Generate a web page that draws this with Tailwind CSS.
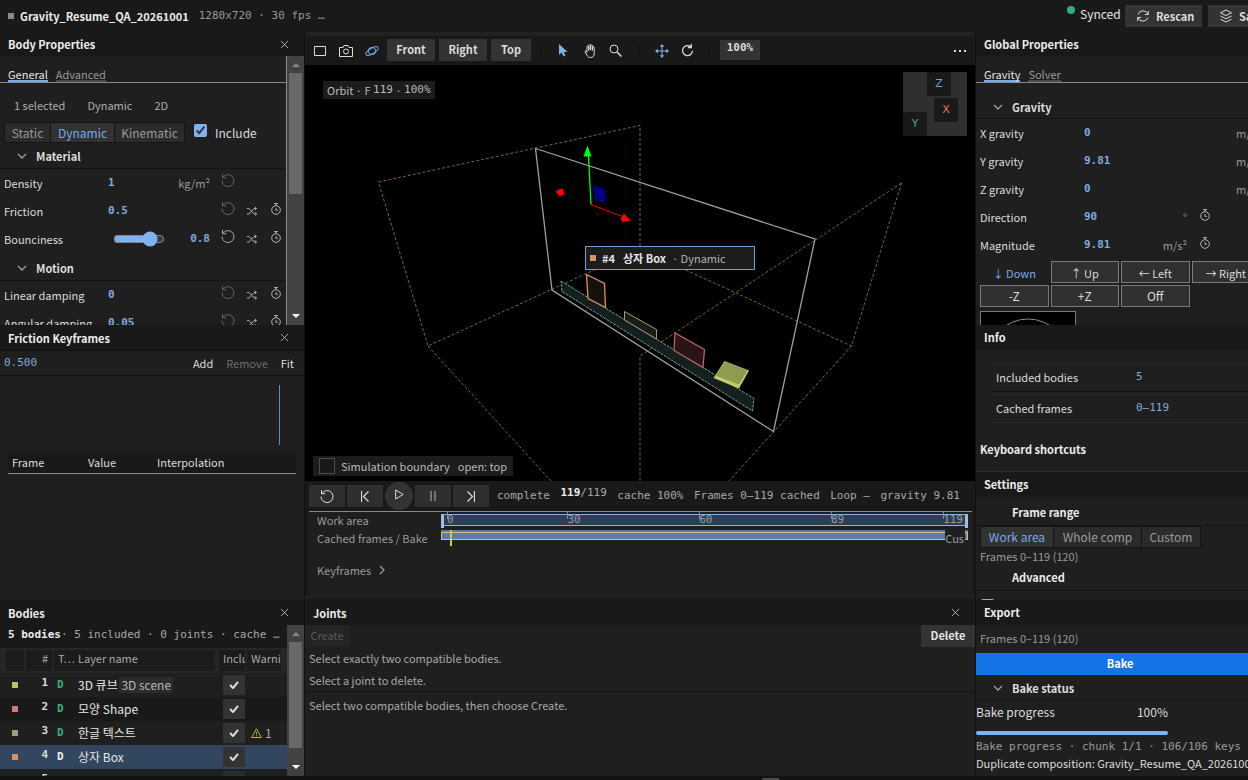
<!DOCTYPE html>
<html lang="en">
  <head>
    <meta charset="UTF-8" />
    <meta name="viewport" content="width=device-width, initial-scale=1.0" />
    <title>Gravity - Gravity_Resume_QA_20261001</title>
    <script src="https://cdn.jsdelivr.net/npm/@tailwindcss/browser@4"></script>
  </head>
  <body
    class="h-screen overflow-hidden flex flex-col bg-[#191919] text-[#dcdcdc] text-[12px] leading-4 font-['Noto_Sans_CJK_KR',sans-serif] scheme-dark"
  >
    <!-- Icon sprite -->
    <svg class="hidden" xmlns="http://www.w3.org/2000/svg">
      <symbol id="i-close" viewBox="0 0 10 10"><path d="M1 1l8 8M9 1l-8 8" fill="none" stroke="currentColor" /></symbol>
      <symbol id="i-chevron" viewBox="0 0 10 6"><path d="M1 1l4 4 4-4" fill="none" stroke="currentColor" stroke-width="1.3" /></symbol>
      <symbol id="i-reset" viewBox="0 0 14 14"><path d="M1.5 1v3.8h3.8M1.8 4.6A6 6 0 1 1 1 7.6" fill="none" stroke="currentColor" /></symbol>
      <symbol id="i-shuffle" viewBox="0 0 10 10"><path d="M0 2.5h2L7 8h2.5M0 8h2L7 2.5h2.5M7.8 .8l1.7 1.7-1.7 1.7M7.8 6.2L9.5 8 7.8 9.7" fill="none" stroke="currentColor" /></symbol>
      <symbol id="i-timer" viewBox="0 0 10 12"><path d="M3 .6h4M5 .6v2M5 4.8V7.2L6.8 7.6" fill="none" stroke="currentColor" /><circle cx="5" cy="7" r="4.3" fill="none" stroke="currentColor" /></symbol>
      <symbol id="i-check" viewBox="0 0 10 8"><path d="M1 4l3 3 5-6" fill="none" stroke="currentColor" stroke-width="2" /></symbol>
    </svg>

    <!-- Top bar -->
    <header class="h-8 shrink-0 flex items-center pl-2 overflow-hidden">
      <span class="size-[6px] bg-[#8a8a8a] mr-[6px]"></span>
      <h1 class="text-[11px] font-bold text-[#ececec]">Gravity_Resume_QA_20261001</h1>
      <span class="ml-[10px] text-[11px] text-[#9a9a9a] font-['DejaVu_Sans_Mono',monospace]">1280x720 · 30 fps …</span>
      <div class="ml-auto flex items-center shrink-0 w-[181px] whitespace-nowrap">
        <span class="size-2 shrink-0 rounded-full bg-[#2fae82] mb-3 mr-[5px]"></span>
        <span class="w-[45px] shrink-0 text-[#e4e4e4] -mt-1">Synced</span>
        <button class="h-[22px] w-[77px] shrink-0 bg-[#333] flex items-center gap-[6px] pl-[11px] text-[11px] font-bold">
          <svg class="size-[14px]" viewBox="0 0 14 14" fill="none" stroke="currentColor"><path d="M2 5.500A5.300 5.300 0 0 1 12 5.200M12.300 2v3.500H8.800M12 8.500A5.300 5.300 0 0 1 2 8.800M1.700 12V8.500H5.200" /></svg>
          Rescan
        </button>
        <button class="ml-[6px] h-[22px] w-[77px] shrink-0 bg-[#333] flex items-center gap-[6px] pl-[11px] text-[11px] font-bold">
          <svg class="size-[14px] shrink-0" viewBox="0 0 14 14" fill="none" stroke="currentColor"><path d="M7 1l5.500 2.800L7 6.600 1.500 3.800zM1.500 7L7 9.800 12.500 7M1.500 10.200L7 13l5.500-2.800" /></svg>
          Save
        </button>
      </div>
    </header>

    <div class="flex-1 min-h-0 flex">
      <!-- Left column -->
      <div class="w-[304px] shrink-0 flex flex-col">
        <!-- Body Properties -->
        <section class="h-[293px] flex flex-col overflow-hidden">
          <div class="h-6 shrink-0 flex items-center justify-between pl-2 pr-[15px]">
            <h2 class="font-bold text-[11px] text-[#ececec]">Body Properties</h2>
            <button aria-label="Close Body Properties"><svg class="size-[9px] text-[#b8b8b8]"><use href="#i-close" /></svg></button>
          </div>
          <div class="flex-1 min-h-0 flex bg-[#1f1f1f]">
            <div class="flex-1 min-w-0 border-r border-[#8a8a8a]">
              <div role="tablist" class="h-[27px] flex items-end gap-2 pl-2 border-b border-[#8a8a8a] text-[11px] leading-3">
                <button role="tab" aria-selected="true" class="border-b-2 border-[#78a9ea] text-[#e4e4e4]">General</button>
                <button role="tab" class="border-b-2 border-[#4a4a4a] text-[#9a9a9a]">Advanced</button>
              </div>
              <div class="h-[39px] pt-[14px] pl-[14px] flex gap-[22px] text-[11px] text-[#adadad]">
                <span>1 selected</span><span>Dynamic</span><span>2D</span>
              </div>
              <div class="h-[21px] pl-1 flex">
                <div class="flex border border-[#141414] divide-x divide-[#141414] bg-[#2b2b2b] text-[#9a9a9a]">
                  <button class="w-[46px]">Static</button>
                  <button class="w-[64px] bg-[#323232] text-[#78a9ea]">Dynamic</button>
                  <button class="w-[69px]">Kinematic</button>
                </div>
                <label class="ml-[9px] flex items-center gap-2 text-[#dcdcdc]">
                  <input type="checkbox" checked class="size-[13px] mb-1 accent-[#7fb2f0]" />Include
                </label>
              </div>
              <h3 class="h-[26px] pt-px pl-[17px] flex items-center gap-[9px] border-b border-[#141414] font-bold text-[11px]"><svg class="w-[10px] h-[6px] text-[#a0a0a0]"><use href="#i-chevron" /></svg>Material</h3>
              <div class="h-7 pl-1 pb-px flex items-center text-[11px]">
                <label for="density" class="w-[104px]">Density</label>
                <input id="density" value="1" class="w-[59px] font-bold text-[#7fa9df] font-['DejaVu_Sans_Mono',monospace]" />
                <span class="w-[43px] text-right text-[#9a9a9a]">kg/m²</span>
                <button aria-label="Reset" class="ml-[11px] mb-[5px] text-[#666]"><svg class="size-[14px]"><use href="#i-reset" /></svg></button>
              </div>
              <div class="h-7 pl-1 pb-px flex items-center text-[11px]">
                <label for="friction" class="w-[104px]">Friction</label>
                <input id="friction" value="0.5" class="w-[102px] font-bold text-[#7fa9df] font-['DejaVu_Sans_Mono',monospace]" />
                <button aria-label="Reset" class="ml-[11px] mb-[5px] text-[#666]"><svg class="size-[14px]"><use href="#i-reset" /></svg></button>
                <button aria-label="Randomize" class="ml-3 text-[#a8a8a8]"><svg class="size-[10px]"><use href="#i-shuffle" /></svg></button>
                <button aria-label="Keyframe" class="ml-[14px] mb-1 text-[#b4b4b4]"><svg class="w-[10px] h-3"><use href="#i-timer" /></svg></button>
              </div>
              <div class="h-7 pl-1 pb-px flex items-center text-[11px]">
                <label for="bounce" class="w-[109px]">Bounciness</label>
                <input id="bounce" type="range" min="0" max="1" step="0.1" value="0.8" class="w-[52px] accent-[#7fb2f0]" />
                <input aria-label="Bounciness value" value="0.8" class="ml-[5px] w-[40px] text-right font-bold text-[#7fa9df] font-['DejaVu_Sans_Mono',monospace]" />
                <button aria-label="Reset" class="ml-[11px] mb-[5px] text-[#a8a8a8]"><svg class="size-[14px]"><use href="#i-reset" /></svg></button>
                <button aria-label="Randomize" class="ml-3 text-[#a8a8a8]"><svg class="size-[10px]"><use href="#i-shuffle" /></svg></button>
                <button aria-label="Keyframe" class="ml-[14px] mb-1 text-[#b4b4b4]"><svg class="w-[10px] h-3"><use href="#i-timer" /></svg></button>
              </div>
              <h3 class="mt-[2px] h-[26px] pt-px pl-[17px] flex items-center gap-[9px] border-b border-[#141414] font-bold text-[11px]"><svg class="w-[10px] h-[6px] text-[#a0a0a0]"><use href="#i-chevron" /></svg>Motion</h3>
              <div class="h-7 pl-1 pb-px flex items-center text-[11px]">
                <label for="lin" class="w-[104px]">Linear damping</label>
                <input id="lin" value="0" class="w-[102px] font-bold text-[#7fa9df] font-['DejaVu_Sans_Mono',monospace]" />
                <button aria-label="Reset" class="ml-[11px] mb-[5px] text-[#666]"><svg class="size-[14px]"><use href="#i-reset" /></svg></button>
                <button aria-label="Randomize" class="ml-3 text-[#a8a8a8]"><svg class="size-[10px]"><use href="#i-shuffle" /></svg></button>
                <button aria-label="Keyframe" class="ml-[14px] mb-1 text-[#b4b4b4]"><svg class="w-[10px] h-3"><use href="#i-timer" /></svg></button>
              </div>
              <div class="h-7 pl-1 pb-px flex items-center text-[11px]">
                <label for="ang" class="w-[104px]">Angular damping</label>
                <input id="ang" value="0.05" class="w-[102px] font-bold text-[#7fa9df] font-['DejaVu_Sans_Mono',monospace]" />
                <button aria-label="Reset" class="ml-[11px] mb-[5px] text-[#666]"><svg class="size-[14px]"><use href="#i-reset" /></svg></button>
                <button aria-label="Randomize" class="ml-3 text-[#a8a8a8]"><svg class="size-[10px]"><use href="#i-shuffle" /></svg></button>
                <button aria-label="Keyframe" class="ml-[14px] mb-1 text-[#b4b4b4]"><svg class="w-[10px] h-3"><use href="#i-timer" /></svg></button>
              </div>
            </div>
            <div class="w-[17px] bg-[#424242] flex flex-col items-center">
              <svg class="h-[17px] w-2 text-[#868686]" viewBox="0 0 8 17"><path d="M0 11l4-4 4 4z" fill="currentColor" /></svg>
              <div class="w-[13px] h-[121px] bg-[#686868]"></div>
              <svg class="mt-auto h-[17px] w-2 text-white" viewBox="0 0 8 17"><path d="M0 6h8l-4 4z" fill="currentColor" /></svg>
            </div>
          </div>
        </section>

        <!-- Friction Keyframes -->
        <section class="flex-1 min-h-0 flex flex-col">
          <div class="h-[26px] shrink-0 flex items-center justify-between pl-2 pr-[15px] border-b border-[#111]">
            <h2 class="font-bold text-[11px] text-[#ececec]">Friction Keyframes</h2>
            <button aria-label="Close Friction Keyframes"><svg class="size-[9px] text-[#b8b8b8]"><use href="#i-close" /></svg></button>
          </div>
          <div class="flex-1 min-h-0 bg-[#1f1f1f]">
            <div class="h-[25px] pl-1 pr-[10px] pb-px flex items-center gap-[13px] border-b border-[#111] text-[11px]">
              <input aria-label="Value" value="0.500" class="flex-1 min-w-0 text-[#7fa9df] font-['DejaVu_Sans_Mono',monospace]" />
              <button>Add</button>
              <button disabled class="text-[#6e6e6e]">Remove</button>
              <button>Fit</button>
            </div>
            <div class="h-[77px] pt-[9px] pr-6 flex justify-end"><div class="w-px h-[60px] bg-[#6a8bb8]"></div></div>
            <table class="mx-2 w-[288px] table-fixed text-[11px] text-left">
              <thead>
                <tr class="h-5 bg-[#191919] border-b border-[#8a8a8a]">
                  <th class="w-[76px] pl-1 pb-[2px] font-normal">Frame</th>
                  <th class="w-[69px] pl-1 pb-[2px] font-normal">Value</th>
                  <th class="pl-1 pb-[2px] font-normal">Interpolation</th>
                </tr>
              </thead>
            </table>
          </div>
        </section>
      </div>

      <!-- Centre column -->
      <main class="flex-1 min-w-0 flex flex-col border-x border-[#101010]">
        <div class="h-1 shrink-0 bg-[#212121]"></div>
        <div class="h-[29px] shrink-0 flex items-center pl-[9px] pr-[9px]">
          <button aria-label="Frame"><svg class="w-[12px] h-[10px]" viewBox="0 0 12 10"><path d="M.5.5h11v9H.5z" fill="none" stroke="#dcdcdc" /></svg></button>
          <button aria-label="Camera" class="ml-[13px]"><svg class="w-[14px] h-3" viewBox="0 0 14 12" fill="none" stroke="#dcdcdc"><path d="M.5 2.500h3.500l1-2h4l1 2h3.500v9H.5z" /><circle cx="7" cy="6.500" r="2.500" /></svg></button>
          <button aria-label="Orbit" class="ml-[12px]"><svg class="w-[14px] h-3" viewBox="0 0 14 12" fill="none" stroke="#78a9ea"><circle cx="7" cy="6" r="3.700" /><ellipse cx="7" cy="6" rx="7" ry="2.600" transform="rotate(-32 7 6)" /></svg></button>
          <div class="ml-2 mb-[2px] flex gap-1 text-[11px] font-bold">
            <button class="h-[22px] w-[48px] pb-px bg-[#333]">Front</button>
            <button class="h-[22px] w-[48px] pb-px bg-[#333]">Right</button>
            <button class="h-[22px] w-[40px] pb-px bg-[#333]">Top</button>
          </div>
          <span class="ml-[10px] w-px h-3 bg-[#101010]"></span>
          <button aria-label="Select" class="ml-4"><svg class="w-[10px] h-[13px]" viewBox="0 0 10 13"><path d="M1 0v11l2.600-2.400L5.600 12.500l1.900-1L5.700 8H9.500z" fill="#7fb2f0" /></svg></button>
          <button aria-label="Pan" class="ml-4"><svg class="w-[12px] h-[14px]" viewBox="0 0 12 14" fill="none" stroke="#dcdcdc"><path d="M3 8V2.800a.9.900 0 0 1 1.800 0V6.500M4.800 6V1.500a.9.900 0 0 1 1.800 0V6M6.600 6.200V1.900a.9.900 0 0 1 1.800 0V6.500M8.400 6.500V3.500a.9.900 0 0 1 1.800 0V9.500C10.200 12 8.800 13.500 6.700 13.500 4.500 13.500 3.800 12.800 2.900 11.200L1 7.800C.8 6.900 2 6.500 2.500 7.200L3.200 8.500" /></svg></button>
          <button aria-label="Zoom" class="ml-[13px]"><svg class="size-[13px]" viewBox="0 0 13 13" fill="none" stroke="#dcdcdc"><circle cx="5" cy="5" r="4" /><path d="M8 8l4.500 4.500" stroke-width="1.500" /></svg></button>
          <span class="ml-4 w-px h-3 bg-[#101010]"></span>
          <button aria-label="Move" class="ml-4"><svg class="size-[14px]" viewBox="0 0 14 14" stroke="#7fb2f0" fill="#7fb2f0"><path d="M7 2v10M2 7h10" /><path d="M7 0L9.200 2.800H4.800zM7 14L4.800 11.200h4.400zM0 7L2.800 4.800v4.400zM14 7L11.200 9.200V4.800z" stroke="none" /></svg></button>
          <button aria-label="Rotate" class="ml-3"><svg class="size-[13px]" viewBox="0 0 13 13" fill="none" stroke="#dcdcdc" stroke-width="1.300"><path d="M9.800 2.800A5 5 0 1 0 11.500 6.800M10.300 0v3.500H6.800" /></svg></button>
          <span class="ml-[15px] w-px h-3 bg-[#101010]"></span>
          <button class="ml-[10px] mb-[2px] h-[20px] w-10 bg-[#333] pb-1 font-bold text-[11px] font-['DejaVu_Sans_Mono',monospace]">100%</button>
          <button aria-label="More" class="ml-auto"><svg class="w-3 h-2" viewBox="0 0 12 2" fill="#dcdcdc"><path d="M0 0h2v2H0zM5 0h2v2H5zM10 0h2v2H10z" /></svg></button>
        </div>

        <!-- Viewport -->
        <div class="relative flex-1 min-h-0 bg-black overflow-hidden">
          <svg class="size-full" viewBox="305 65 670 416" fill="none">
            <g stroke="#8f6b45" stroke-opacity=".9" stroke-dasharray="3 2">
              <path d="M378.500 182L640 125.500V249L428 346zM901.500 183L640 356V481M901.500 183L851.500 346 640 249M428 346L551 481M851.500 346L729 481" />
            </g>
            <path d="M535.500 148.500L815 239l-41.500 192.500L552 290z" stroke="#a0a0a0" stroke-width="1.300" />
            <path d="M561 281l193 117.500-1.500 12.500L562 291.500z" fill="#14201f" stroke="#6f9c98" stroke-dasharray="3 1" />
            <path d="M586.500 274.500l18 9 1 24-17.500-9z" fill="#15110c" stroke="#d8935c" stroke-width="1.300" />
            <path d="M624.500 311.500l32 18v9.500l-32-19z" fill="#1d1b15" stroke="#a39a80" />
            <path d="M675 333l29.500 16.500-1.500 18-29-17z" fill="#2a1417" stroke="#c46a6a" stroke-width="1.200" />
            <path d="M724.500 361l24.500 9.500-10 18-25.500-10.500z" fill="#c0cc66" />
            <path d="M725 361.500l22.500 9-8.500 14-23.500-9z" fill="#8e9b50" />
            <path d="M591 204.500L588.500 156" stroke="#0f0" stroke-width="1.300" />
            <path d="M587.500 145.500l4 11h-8z" fill="#0f0" />
            <path d="M591 204.500l30 11.500" stroke="#d00" stroke-width="1.200" />
            <path d="M631 221l-9 1-1-4 3-4.500zM557 190l6-1.500 1.500 5.500-4.500 2.500-4-4z" fill="#f00" />
            <path d="M593.500 185l11.500 4.500.5 14-11.500-5z" fill="#00008b" />
          </svg>
          <div class="absolute left-[18px] top-[16px] h-[18px] px-1 bg-[#1c1c1c] flex items-center text-[11px] text-[#b9b9b9] whitespace-pre">Orbit · F <span class="font-['DejaVu_Sans_Mono',monospace]">119</span> · <span class="font-['DejaVu_Sans_Mono',monospace]">100%</span></div>
          <div class="absolute left-[280px] top-[181px] w-[170px] h-6 pl-1 bg-[#1c1c1c] border border-[#6f9fd0] flex items-center text-[11px] text-[#b4b4b4]">
            <span class="size-[6px] bg-[#d8935c] mr-[6px]"></span>
            <b class="text-[#e4e4e4] mr-2">#4</b>
            <b class="text-[#e4e4e4] mr-[6px]">상자 Box</b>
            <span>· Dynamic</span>
          </div>
          <!-- Axis gizmo -->
          <div class="absolute right-2 top-[7px] size-16 bg-[#2f2f2f] text-[11px] font-['DejaVu_Sans',sans-serif]">
            <button class="absolute left-6 top-0 size-6 bg-[#191919] text-[#6aa5e8]">Z</button>
            <button class="absolute left-[31px] top-[26px] size-6 bg-[#191919] text-[#e8785a]">X</button>
            <button class="absolute left-0 top-10 size-6 bg-[#191919] text-[#38b277]">Y</button>
          </div>
          <label class="absolute left-2 bottom-[5px] h-5 px-[6px] bg-[#1c1c1c] flex items-center text-[11px] text-[#b9b9b9]">
            <input type="checkbox" class="appearance-none size-4 border border-[#4c4c4c] bg-[#191919] mr-[6px]" />
            <span class="mr-2">Simulation boundary</span>
            <span>open: top</span>
          </label>
        </div>

        <!-- Transport -->
        <div class="h-[30px] shrink-0 pl-1 pr-[15px] flex items-center text-[11px] text-[#a8a8a8] font-['DejaVu_Sans_Mono',monospace] whitespace-nowrap">
          <div class="flex items-center gap-[2px] mr-2 text-[#dcdcdc]">
            <button aria-label="Reset" class="h-[22px] w-[36px] bg-[#2e2e2e] grid place-items-center"><svg class="size-[14px]"><use href="#i-reset" /></svg></button>
            <button aria-label="First frame" class="h-[22px] w-[36px] bg-[#2e2e2e] grid place-items-center"><svg class="w-2 h-[11px]" viewBox="0 0 8 11" fill="none" stroke="currentColor"><path d="M.5 0v11M7.500.5l-5 5 5 5" stroke-width="1.200" /></svg></button>
            <button aria-label="Play" class="size-7 rounded-full bg-[#333] grid place-items-center pb-1"><svg class="w-[9px] h-[11px]" viewBox="0 0 9 11" fill="none" stroke="currentColor"><path d="M.7 1l7.500 4.500L.7 10z" /></svg></button>
            <button aria-label="Pause" class="h-[22px] w-[36px] bg-[#2e2e2e] grid place-items-center text-[#a0a0a0]"><svg class="w-[6px] h-[10px]" viewBox="0 0 6 10" stroke="currentColor"><path d="M1 0v10M5 0v10" stroke-width="1.200" /></svg></button>
            <button aria-label="Last frame" class="h-[22px] w-[36px] bg-[#2e2e2e] grid place-items-center"><svg class="w-2 h-[11px]" viewBox="0 0 8 11" fill="none" stroke="currentColor"><path d="M7.500 0v11M.5.5l5 5-5 5" stroke-width="1.200" /></svg></button>
          </div>
          <div class="flex-1 flex justify-between">
            <span>complete</span>
            <span class="-mt-[3px]"><b class="text-[#ececec]">119</b>/119</span>
            <span>cache 100%</span>
            <span>Frames 0–119 cached</span>
            <span>Loop —</span>
            <span>gravity 9.81</span>
          </div>
        </div>
        <!-- Timeline -->
        <div class="h-[84px] shrink-0 ml-1 mr-[3px] border-t border-[#8a8a8a] bg-[#1f1f1f] pl-2 pr-1 text-[11px] text-[#9a9a9a]">
          <div class="h-[18px] flex">
            <span class="w-[124px]">Work area</span>
            <div class="relative flex-1 mt-[2px] h-[12px] bg-[#2d3f57] border-y border-[#8ab4e8] font-['DejaVu_Sans_Mono',monospace] leading-[10px]">
              <span class="absolute left-0 top-0 w-[3px] h-[13px] bg-[#a3bfe0]"></span>
              <span class="absolute left-[6px] -top-1 h-2 border-l border-[#8a8a8a]"></span>
              <span class="absolute left-[6px] top-0">0</span>
              <span class="absolute left-[24%] -top-1 h-2 border-l border-[#8a8a8a]"></span>
              <span class="absolute left-[24%] top-0">30</span>
              <span class="absolute left-[49%] -top-1 h-2 border-l border-[#8a8a8a]"></span>
              <span class="absolute left-[49%] top-0">60</span>
              <span class="absolute left-[74%] -top-1 h-2 border-l border-[#8a8a8a]"></span>
              <span class="absolute left-[74%] top-0">89</span>
              <span class="absolute right-[24px] -top-1 h-2 border-l border-[#8a8a8a]"></span>
              <span class="absolute right-[5px] top-0">119</span>
              <span class="absolute right-0 top-0 w-[3px] h-[13px] bg-[#a3bfe0]"></span>
            </div>
          </div>
          <div class="h-4 flex">
            <span class="w-[124px] whitespace-nowrap">Cached frames / Bake</span>
            <div class="relative flex-1 h-[10px] bg-[#5b7da6]">
              <div class="absolute inset-x-0 bottom-0 h-2 border border-[#d6c184]"></div>
              <span class="absolute right-[3px] top-0 pr-px bg-[#1f1f1f] leading-4 h-4">Cus</span>
              <span class="absolute left-[9px] top-0 w-[2px] h-4 bg-[#d6c15a]"></span>
            </div>
          </div>
          <button class="mt-4 flex items-center gap-2">Keyframes
            <svg class="w-[6px] h-[10px]" viewBox="0 0 6 10" fill="none" stroke="currentColor" stroke-width="1.300"><path d="M1 1l4 4-4 4" /></svg>
          </button>
        </div>
        <div class="h-[5px] shrink-0 border-t-4 border-[#212121]"></div>
      </main>

      <!-- Right column -->
      <aside class="w-[272px] shrink-0 overflow-hidden">
        <div class="w-72 h-full flex flex-col">
          <section class="h-[293px] shrink-0 overflow-hidden flex flex-col">
            <h2 class="h-6 shrink-0 pl-2 leading-6 font-bold text-[11px] text-[#ececec]">Global Properties</h2>
            <div class="flex-1 bg-[#1f1f1f] text-[11px]">
              <div role="tablist" class="h-[27px] flex items-end gap-2 pl-2 border-b border-[#8a8a8a] leading-3">
                <button role="tab" aria-selected="true" class="border-b-2 border-[#78a9ea] text-[#e4e4e4]">Gravity</button>
                <button role="tab" class="border-b-2 border-[#4a4a4a] text-[#9a9a9a]">Solver</button>
              </div>
              <h3 class="mt-[11px] h-[25px] pt-px pl-[17px] flex items-center gap-[9px] border-b border-[#141414] font-bold"><svg class="w-[10px] h-[6px] text-[#a0a0a0]"><use href="#i-chevron" /></svg>Gravity</h3>
              <div class="h-7 pl-1 pb-px flex items-center">
                <label for="gx" class="w-[104px]">X gravity</label>
                <input id="gx" value="0" class="w-[152px] font-bold text-[#7fa9df] font-['DejaVu_Sans_Mono',monospace]" />
                <span class="text-[#9a9a9a]">m/s²</span>
              </div>
              <div class="h-7 pl-1 pb-px flex items-center">
                <label for="gy" class="w-[104px]">Y gravity</label>
                <input id="gy" value="9.81" class="w-[152px] font-bold text-[#7fa9df] font-['DejaVu_Sans_Mono',monospace]" />
                <span class="text-[#9a9a9a]">m/s²</span>
              </div>
              <div class="h-7 pl-1 pb-px flex items-center">
                <label for="gz" class="w-[104px]">Z gravity</label>
                <input id="gz" value="0" class="w-[152px] font-bold text-[#7fa9df] font-['DejaVu_Sans_Mono',monospace]" />
                <span class="text-[#9a9a9a]">m/s²</span>
              </div>
              <div class="h-7 pl-1 pb-px flex items-center">
                <label for="dir" class="w-[104px]">Direction</label>
                <input id="dir" value="90" class="w-[60px] font-bold text-[#7fa9df] font-['DejaVu_Sans_Mono',monospace]" />
                <span class="w-[43px] text-right text-[#9a9a9a]">°</span>
                <button aria-label="Keyframe" class="ml-[13px] mb-1 text-[#b4b4b4]"><svg class="w-[10px] h-3"><use href="#i-timer" /></svg></button>
              </div>
              <div class="h-7 pl-1 pb-px flex items-center">
                <label for="mag" class="w-[104px]">Magnitude</label>
                <input id="mag" value="9.81" class="w-[60px] font-bold text-[#7fa9df] font-['DejaVu_Sans_Mono',monospace]" />
                <span class="w-[43px] text-right text-[#9a9a9a]">m/s²</span>
                <button aria-label="Keyframe" class="ml-[13px] mb-1 text-[#b4b4b4]"><svg class="w-[10px] h-3"><use href="#i-timer" /></svg></button>
              </div>
              <div class="mt-[2px] ml-1 w-[280px] grid grid-cols-4 gap-[2px] text-[12px]">
                <button class="h-[22px] pt-[2px] text-[11px] text-[#78a9ea]">↓ Down</button>
                <button class="h-[22px] pt-[2px] text-[11px] bg-[#303030] border border-[#7a7a7a]">↑ Up</button>
                <button class="h-[22px] pt-[2px] text-[11px] bg-[#303030] border border-[#7a7a7a]">← Left</button>
                <button class="h-[22px] pt-[2px] text-[11px] bg-[#303030] border border-[#7a7a7a]">→ Right</button>
                <button class="h-[22px] bg-[#303030] border border-[#7a7a7a]">-Z</button>
                <button class="h-[22px] bg-[#303030] border border-[#7a7a7a]">+Z</button>
                <button class="h-[22px] bg-[#303030] border border-[#7a7a7a]">Off</button>
              </div>
              <svg class="ml-1 mt-1 size-24 bg-black border border-[#7a7a7a]" viewBox="0 0 94 94" fill="none" stroke="#8a8a8a"><circle cx="47" cy="47" r="40" /></svg>
            </div>
          </section>

          <section>
            <h2 class="h-[25px] pl-2 leading-[25px] font-bold text-[11px] text-[#ececec]">Info</h2>
            <div class="h-[122px] pt-[14px] bg-[#1f1f1f] border-b border-[#2b2b2b] text-[11px]">
              <dl class="ml-4">
                <div class="h-7 pl-1 pb-[2px] flex items-center border-t border-[#2b2b2b] border-b border-b-[#141414]"><dt class="w-[140px]">Included bodies</dt><dd class="text-[#7fa9df] font-['DejaVu_Sans_Mono',monospace]">5</dd></div>
                <div class="mt-[2px] h-[29px] pl-1 pb-[2px] flex items-center border-y border-[#2b2b2b]"><dt class="w-[140px]">Cached frames</dt><dd class="text-[#7fa9df] font-['DejaVu_Sans_Mono',monospace]">0–119</dd></div>
              </dl>
              <h3 class="mt-[18px] pl-1 font-bold text-[#ececec]">Keyboard shortcuts</h3>
            </div>
          </section>

          <section class="flex-1 min-h-0 overflow-hidden">
            <h2 class="h-[25px] pl-2 leading-[25px] font-bold text-[11px] text-[#ececec]">Settings</h2>
            <div class="h-full bg-[#1f1f1f] pt-[3px]">
              <h3 class="h-[26px] pl-9 leading-[24px] font-bold text-[11px] border-b border-[#141414] text-[#ececec]">Frame range</h3>
              <div class="pl-1 flex">
                <div class="h-[22px] flex border border-[#141414] divide-x divide-[#141414] bg-[#2b2b2b] text-[#9a9a9a]">
                  <button class="w-[73px] bg-[#323232] text-[#78a9ea]">Work area</button>
                  <button class="w-[88px]">Whole comp</button>
                  <button class="w-[58px]">Custom</button>
                </div>
              </div>
              <p class="pl-1 text-[11px] text-[#9a9a9a]">Frames 0–119 (120)</p>
              <h3 class="h-[26px] mt-px pl-9 leading-[24px] font-bold text-[11px] border-b border-[#141414] text-[#ececec]">Advanced</h3>
              <input type="checkbox" checked aria-label="Advanced option" class="block ml-[5px] mt-2 size-[13px] accent-[#7fb2f0]" />
            </div>
          </section>
        </div>
      </aside>
    </div>

    <!-- Bottom row -->
    <div class="h-44 shrink-0 flex">
      <!-- Bodies -->
      <section class="w-[304px] shrink-0 flex flex-col">
        <div class="h-[25px] shrink-0 flex items-center justify-between pl-2 pr-[15px]">
          <h2 class="font-bold text-[11px] text-[#ececec]">Bodies</h2>
          <button aria-label="Close Bodies"><svg class="size-[9px] text-[#b8b8b8]"><use href="#i-close" /></svg></button>
        </div>
        <div class="flex-1 min-h-0 flex overflow-hidden">
          <div class="flex-1 min-w-0">
            <p class="h-[23px] pl-2 pt-[2px] text-[11px] text-[#a8a8a8] font-['DejaVu_Sans_Mono',monospace] whitespace-nowrap"><b class="text-[#ececec]">5 bodies</b>· 5 included · 0 joints · cache …</p>
            <table class="w-full table-fixed text-[11px] text-left border-collapse">
              <thead>
                <tr class="h-[25px] bg-[#262626] text-[#a8a8a8]">
                  <th class="w-[26px] font-normal"><div class="ml-[6px] h-[21px] w-[18px] bg-[#1c1c1c]"></div></th>
                  <th class="w-[28px] font-normal"><div class="h-[21px] w-[26px] pr-1 text-right bg-[#1c1c1c]">#</div></th>
                  <th class="w-[23px] font-normal"><div class="h-[21px] pl-1 bg-[#1c1c1c]">T…</div></th>
                  <th class="w-[142px] font-normal"><div class="h-[21px] w-[138px] pl-px bg-[#1c1c1c]">Layer name</div></th>
                  <th class="w-[28px] font-normal"><div class="h-[21px] w-[26px] pl-1 overflow-hidden bg-[#1c1c1c]">Included</div></th>
                  <th class="font-normal"><div class="h-[21px] w-[34px] pl-1 overflow-hidden bg-[#1c1c1c]">Warnings</div></th>
                </tr>
              </thead>
              <tbody>
                <tr class="h-6 bg-[#1f1f1f]">
                  <td><div class="ml-3 size-[6px] bg-[#b8c46a]"></div></td>
                  <td class="pr-[6px] pb-1 text-right font-bold font-['DejaVu_Sans_Mono',monospace]">1</td>
                  <td class="pl-[3px] font-bold text-[#38b277] font-['DejaVu_Sans_Mono',monospace]">D</td>
                  <td class="pl-px whitespace-nowrap text-[12px] text-[#e4e4e4]">3D 큐브 <span class="inline-block -ml-px px-[2px] bg-[#2b2b2b] text-[#b9b9b9]">3D scene</span></td>
                  <td class="pl-1"><button aria-label="Include 3D 큐브" class="w-[22px] h-5 bg-[#333] grid place-items-center"><svg class="w-[10px] h-2"><use href="#i-check" /></svg></button></td>
                  <td></td>
                </tr>
                <tr class="h-6 bg-[#191919]">
                  <td><div class="ml-3 size-[6px] bg-[#d07a78]"></div></td>
                  <td class="pr-[6px] pb-1 text-right font-bold font-['DejaVu_Sans_Mono',monospace]">2</td>
                  <td class="pl-[3px] font-bold text-[#38b277] font-['DejaVu_Sans_Mono',monospace]">D</td>
                  <td class="pl-px whitespace-nowrap text-[12px] text-[#e4e4e4]">모양 Shape</td>
                  <td class="pl-1"><button aria-label="Include 모양 Shape" class="w-[22px] h-5 bg-[#333] grid place-items-center"><svg class="w-[10px] h-2"><use href="#i-check" /></svg></button></td>
                  <td></td>
                </tr>
                <tr class="h-6 bg-[#1f1f1f]">
                  <td><div class="ml-3 size-[6px] bg-[#a39a80]"></div></td>
                  <td class="pr-[6px] pb-1 text-right font-bold font-['DejaVu_Sans_Mono',monospace]">3</td>
                  <td class="pl-[3px] font-bold text-[#38b277] font-['DejaVu_Sans_Mono',monospace]">D</td>
                  <td class="pl-px whitespace-nowrap text-[12px] text-[#e4e4e4]">한글 텍스트</td>
                  <td class="pl-1"><button aria-label="Include 한글 텍스트" class="w-[22px] h-5 bg-[#333] grid place-items-center"><svg class="w-[10px] h-2"><use href="#i-check" /></svg></button></td>
                  <td class="pl-1"><div class="flex items-center gap-[3px] text-[12px] text-[#a8a8a8]"><svg class="w-[11px] h-[10px]" viewBox="0 0 11 10" fill="none" stroke="#c9a84f"><path d="M5.500.8L10.300 9.500H.7zM5.500 4v2.500M5.500 7.300v1" /></svg>1</div></td>
                </tr>
                <tr class="h-6 bg-[#32475f]" aria-selected="true">
                  <td><div class="ml-3 size-[6px] bg-[#d8935c]"></div></td>
                  <td class="pr-[6px] pb-1 text-right font-bold font-['DejaVu_Sans_Mono',monospace]">4</td>
                  <td class="pl-[3px] font-bold text-[#ececec] font-['DejaVu_Sans_Mono',monospace]">D</td>
                  <td class="pl-px whitespace-nowrap text-[12px] text-[#e4e4e4]">상자 Box</td>
                  <td class="pl-1"><button aria-label="Include 상자 Box" class="w-[22px] h-5 bg-[#333] grid place-items-center"><svg class="w-[10px] h-2"><use href="#i-check" /></svg></button></td>
                  <td></td>
                </tr>
                <tr class="h-6 bg-[#1f1f1f]">
                  <td></td>
                  <td class="pr-[6px] pb-1 text-right font-bold font-['DejaVu_Sans_Mono',monospace]">5</td>
                  <td></td>
                  <td></td>
                  <td class="pl-1"><div class="w-[22px] h-5 bg-[#2b2b2b]"></div></td>
                  <td></td>
                </tr>
              </tbody>
            </table>
          </div>
          <div class="w-[17px] bg-[#424242] flex flex-col items-center">
            <svg class="h-[17px] w-2 text-[#868686]" viewBox="0 0 8 17"><path d="M0 11l4-4 4 4z" fill="currentColor" /></svg>
            <div class="w-[13px] h-[106px] bg-[#686868]"></div>
            <svg class="mt-auto h-[17px] w-2 text-white" viewBox="0 0 8 17"><path d="M0 6h8l-4 4z" fill="currentColor" /></svg>
          </div>
        </div>
      </section>

      <!-- Joints -->
      <section class="flex-1 min-w-0 flex flex-col border-x border-[#101010]">
        <div class="h-[25px] shrink-0 flex items-center justify-between pl-2 pr-[15px]">
          <h2 class="font-bold text-[11px] text-[#ececec]">Joints</h2>
          <button aria-label="Close Joints"><svg class="size-[9px] text-[#b8b8b8]"><use href="#i-close" /></svg></button>
        </div>
        <div class="flex-1 bg-[#1f1f1f] text-[11px] text-[#a8a8a8]">
          <div class="flex justify-between">
            <button disabled class="h-[22px] w-[44px] pb-[2px] bg-[#242424] text-[#5a5a5a]">Create</button>
            <button class="h-[22px] w-[54px] pb-[2px] bg-[#333] font-bold text-[#e4e4e4]">Delete</button>
          </div>
          <div class="h-[45px] px-1 border-b border-[#111] leading-[22px]">
            <p>Select exactly two compatible bodies.</p>
            <p>Select a joint to delete.</p>
          </div>
          <p class="px-1 pt-[5px]">Select two compatible bodies, then choose Create.</p>
        </div>
      </section>

      <!-- Export -->
      <section class="w-[272px] shrink-0 overflow-hidden">
        <div class="w-72 h-full flex flex-col">
          <h2 class="h-[25px] shrink-0 pl-2 leading-[25px] font-bold text-[11px] text-[#ececec]">Export</h2>
          <div class="flex-1 bg-[#1f1f1f] text-[11px]">
            <p class="h-7 pl-1 leading-[26px] text-[#9a9a9a]">Frames 0–119 (120)</p>
            <button class="block w-full h-[22px] pb-[2px] bg-[#1473e6] font-bold text-white">Bake</button>
            <h3 class="h-[26px] pl-[17px] flex items-center gap-[9px] border-b border-[#141414] font-bold"><svg class="w-[10px] h-[6px] text-[#a0a0a0]"><use href="#i-chevron" /></svg>Bake status</h3>
            <div class="pt-[3px] w-48 flex justify-between text-[12px]"><label for="bake">Bake progress</label><span>100%</span></div>
            <progress id="bake" value="100" max="100" class="block mt-[11px] w-48 h-1 appearance-none [&::-webkit-progress-bar]:bg-[#333] [&::-webkit-progress-bar]:rounded-full [&::-webkit-progress-value]:bg-[#7fb2f0] [&::-webkit-progress-value]:rounded-full"></progress>
            <p class="mt-[4px] whitespace-nowrap text-[#9a9a9a] font-['DejaVu_Sans_Mono',monospace]">Bake progress · chunk 1/1 · 106/106 keys</p>
            <p class="whitespace-nowrap">Duplicate composition: Gravity_Resume_QA_20261001</p>
          </div>
        </div>
      </section>
    </div>
    <footer class="h-1 shrink-0 flex bg-[#121212]"><div class="ml-[762px] mt-[2px] w-[17px] bg-[#4a4a4a]"></div></footer>
  </body>
</html>
